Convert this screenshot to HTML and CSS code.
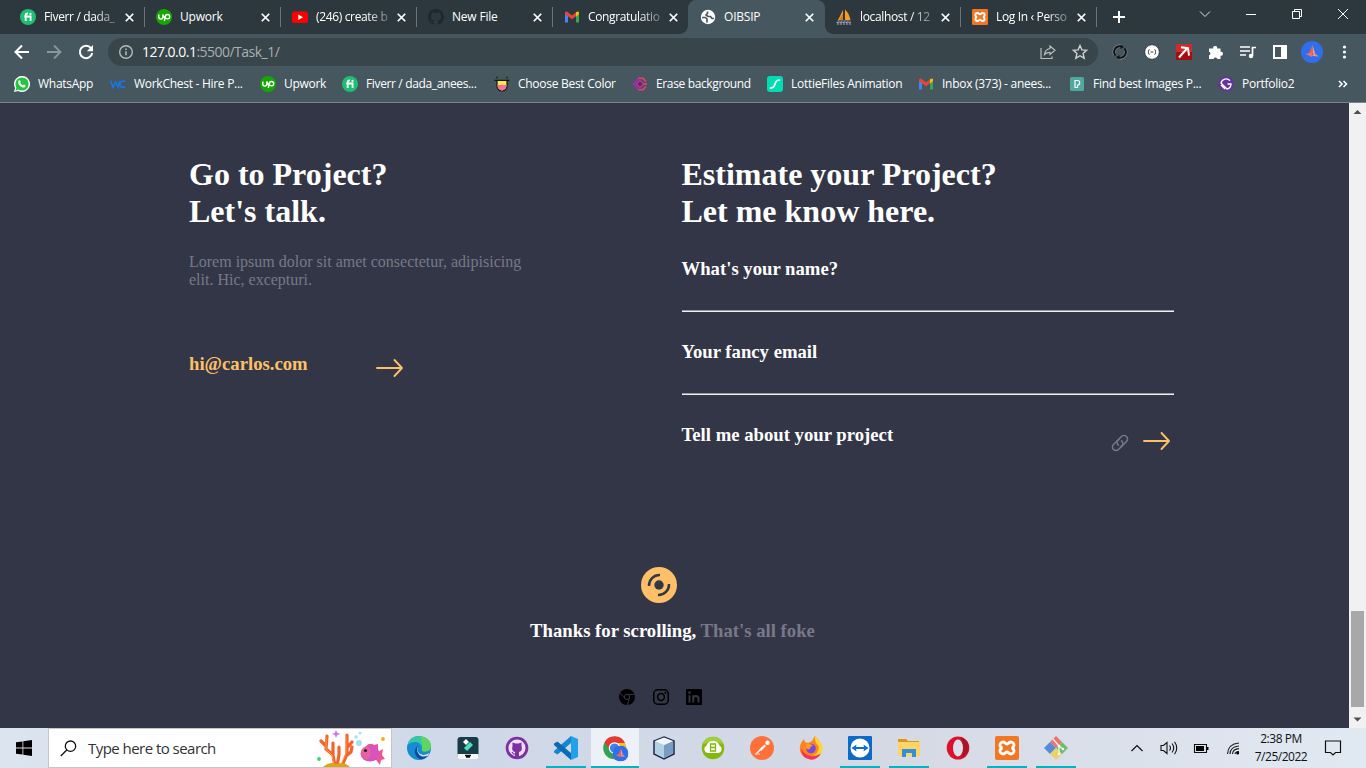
FILE: index.html
```html
<!DOCTYPE html>
<html lang="en">
<head>
<meta charset="utf-8">
<title>OIBSIP</title>
<link rel="stylesheet" href="styles.css">
</head>
<body>
<svg width="0" height="0" class="defs">
  <symbol id="close" viewBox="0 0 16 16"><path d="M4 4l8 8M12 4l-8 8" stroke="#fff" stroke-width="1.800" fill="none"/></symbol>
  <symbol id="fiverr" viewBox="0 0 16 16"><circle cx="8" cy="8" r="8" fill="#1dbf73"/><path d="M5.700 12V6.200Q5.700 4.300 8 4.500M4.300 7.500h6.300V12" stroke="#fff" stroke-width="1.800" fill="none"/><circle cx="10.500" cy="4.900" r="1.100" fill="#fff"/></symbol>
  <symbol id="upwork" viewBox="0 0 16 16"><circle cx="8" cy="8" r="8" fill="#14a800"/><path d="M2.800 5.500v2.600a2 2 0 0 0 4 0V5.500Q7.500 8 9 9.600M8.300 12l1-4.300a2.200 2.200 0 1 1 2.300 2.200Q9.800 9.800 8.500 8" stroke="#fff" stroke-width="1.400" fill="none"/></symbol>
  <symbol id="gmail" viewBox="0 0 16 16"><path d="M1 4v9.500h3V7z" fill="#4285f4"/><path d="M15 4v9.500h-3V7z" fill="#34a853"/><path d="M1 4Q1 2 3 2.600L8 6.400l5-3.800V6.500L8 10.300 1 5z" fill="#ea4335"/><path d="M12 3.300Q15 1.500 15 4v1.300l-3 2.300z" fill="#fbbc04"/></symbol>
  <symbol id="xampp" viewBox="0 0 24 24"><rect width="24" height="24" rx="2" fill="#f37623"/><path d="M7.500 12a3 3 0 1 1 2.700-5Q12 9 13.800 7a3 3 0 1 1 2.700 5 3 3 0 1 1-2.700 5Q12 15 10.200 17a3 3 0 1 1-2.700-5z" fill="none" stroke="#fff" stroke-width="2.900"/></symbol>
  <symbol id="github" viewBox="0 0 16 16"><path fill="currentColor" d="M8 0C3.580 0 0 3.580 0 8c0 3.540 2.290 6.530 5.470 7.590.4.070.550-.170.550-.380 0-.190-.010-.820-.010-1.490-2.010.370-2.530-.490-2.690-.940-.090-.230-.480-.940-.820-1.130-.280-.150-.680-.520-.010-.530.630-.010 1.080.580 1.230.820.720 1.210 1.870.870 2.330.660.070-.520.280-.870.510-1.070-1.780-.200-3.640-.890-3.640-3.950 0-.870.310-1.590.820-2.150-.080-.200-.360-1.020.080-2.120 0 0 .670-.210 2.200.820.640-.180 1.320-.270 2-.270s1.360.090 2 .270c1.530-1.040 2.200-.820 2.200-.820.440 1.100.160 1.920.080 2.120.510.560.820 1.270.820 2.150 0 3.070-1.870 3.750-3.650 3.950.290.250.540.730.540 1.480 0 1.070-.010 1.930-.010 2.200 0 .210.150.460.550.380A8.010 8.010 0 0 0 16 8c0-4.420-3.580-8-8-8z"/></symbol>
  <symbol id="bird" viewBox="0 0 22 22"><circle cx="11" cy="11" r="11" fill="#2f6fed"/><path d="M11.500 4l2.500 8-2.500 1z" fill="#ff9a83"/><path d="M11.500 4L8 12l3.500 1z" fill="#e9604f"/><path d="M4.500 13l6.500-1.500V16z" fill="#f56f60"/><path d="M17.500 15.500L13 11.500 11 15z" fill="#fb8c76"/></symbol>
  <symbol id="arrow" viewBox="0 0 28 20"><path d="M1 10h25M18.500 2l7.500 8-7.500 8" fill="none" stroke="#fdc068" stroke-width="1.900" stroke-linecap="round" stroke-linejoin="round"/></symbol>
</svg>

<header class="browser">
  <div class="tabstrip">
    <div class="tab sep"><svg><use href="#fiverr"/></svg><span class="fade">Fiverr / dada_</span><svg class="x"><use href="#close"/></svg></div>
    <div class="tab sep"><svg><use href="#upwork"/></svg><span>Upwork</span><svg class="x"><use href="#close"/></svg></div>
    <div class="tab sep"><svg viewBox="0 0 16 16"><rect y="2.500" width="16" height="11.500" rx="2.500" fill="#f00"/><path d="M6.300 5.500l4.700 2.700-4.700 2.700z" fill="#fff"/></svg><span class="fade">(246) create b</span><svg class="x"><use href="#close"/></svg></div>
    <div class="tab sep"><svg class="gh"><use href="#github"/></svg><span>New File</span><svg class="x"><use href="#close"/></svg></div>
    <div class="tab"><svg><use href="#gmail"/></svg><span class="fade">Congratulatio</span><svg class="x"><use href="#close"/></svg></div>
    <div class="tab active"><svg viewBox="0 0 16 16"><circle cx="8" cy="8" r="7.200" fill="#fff"/><path d="M2 8.500h3.500l1.500 1.500v3.500M7.500 2.500v2L6 6l2 1.500h2.500L12 9.500h2" fill="none" stroke="#46575f" stroke-width="1.700"/></svg><span>OIBSIP</span><svg class="x"><use href="#close"/></svg></div>
    <div class="tab sep"><svg viewBox="0 0 16 16"><path d="M7 1L2 11h5zM9 .5V11h5.500Q13 4 9 .5z" fill="#f89c1d"/><path d="M7 4L3.500 11H7z" fill="#e0760b"/><path d="M1.500 12h13M.5 13.500h15M1 15h14" stroke="#a8a9c9" stroke-width="1" stroke-dasharray="2.200 .8"/></svg><span class="fade">localhost / 12</span><svg class="x"><use href="#close"/></svg></div>
    <div class="tab sep"><svg><use href="#xampp"/></svg><span class="fade">Log In ‹ Perso</span><svg class="x"><use href="#close"/></svg></div>
    <svg class="plus" viewBox="0 0 16 16"><path d="M8 2v12M2 8h12" stroke="#fff" stroke-width="2"/></svg>
    <div class="winctl">
      <svg viewBox="0 0 12 12"><path d="M1 3.500l5 5 5-5" fill="none" stroke="#ddd"/></svg>
      <svg viewBox="0 0 12 12"><path d="M1 6.500h10" stroke="#fff"/></svg>
      <svg viewBox="0 0 12 12"><path d="M1.500 3.500h7v7h-7zM3.500 3.500v-2h7v7h-2" fill="none" stroke="#fff"/></svg>
      <svg viewBox="0 0 12 12"><path d="M1 1l10 10M11 1L1 11" stroke="#fff"/></svg>
    </div>
  </div>

  <div class="toolbar">
    <div class="nav">
      <svg viewBox="0 0 16 16"><path d="M15 8H2M8 1.500L1.500 8 8 14.500" fill="none" stroke="#fff" stroke-width="2"/></svg>
      <svg viewBox="0 0 16 16"><path d="M1 8h13M8 1.500L14.500 8 8 14.500" fill="none" stroke="#8c979c" stroke-width="1.800"/></svg>
      <svg viewBox="0 0 16 16"><path d="M13 4.200A6.200 6.200 0 1 0 14.200 9" fill="none" stroke="#fff" stroke-width="2"/><path d="M15 1v6.200H8.800z" fill="#fff"/></svg>
    </div>
    <div class="omnibox">
      <svg viewBox="0 0 16 16"><circle cx="8" cy="8" r="6.300" fill="none" stroke="#b5bdc0" stroke-width="1.400"/><path d="M8 7.200v4M8 4.400v1.500" stroke="#b5bdc0" stroke-width="1.500"/></svg>
      <div class="url"><b>127.0.0.1</b>:5500/Task_1/</div>
      <svg viewBox="0 0 16 16"><path d="M1 4v10.500h11v-2" fill="none" stroke="#b5bdc0" stroke-width="1.200"/><path d="M10 2l5 4.300-5 4.200V8.300Q6.500 8.300 4.500 10.500q.5-5 5.500-6z" fill="none" stroke="#b5bdc0" stroke-width="1.200"/></svg>
      <svg viewBox="0 0 16 16"><path d="M8 1.500l1.900 4.400 4.800.4-3.600 3.200 1.100 4.700L8 11.700l-4.200 2.500 1.100-4.700L1.300 6.300l4.800-.4z" fill="none" stroke="#ccd1d3" stroke-width="1.400"/></svg>
    </div>
    <div class="ext">
      <svg viewBox="0 0 16 16"><g fill="none" stroke="#8d989d" stroke-width="3"><path d="M3 11a6 6 0 0 1 6-9M13 5a6 6 0 0 1-6 9"/></g><g fill="none" stroke="#111" stroke-width="2"><path d="M3.500 11.500A5.700 5.700 0 0 1 9 2.300M12.500 4.500A5.700 5.700 0 0 1 7 13.700"/></g><path d="M8.500.8L12 3 8.500 5zM7.500 11L4 13.200 7.500 15.200z" fill="#111"/></svg>
      <svg viewBox="0 0 16 16"><circle cx="8" cy="8" r="7.300" fill="#fff" stroke="#26313a" stroke-width=".8"/><path d="M5.500 5.500Q4.300 5.500 4.700 7.200L4 8l.7.800q-.4 1.700.8 1.700M10.500 5.500q1.200 0 .8 1.700l.7.800-.7.800q.4 1.700-.8 1.700M6.500 8h3" fill="none" stroke="#333" stroke-width=".9"/></svg>
      <svg viewBox="0 0 16 16"><rect width="16" height="16" fill="#cf2a2c"/><rect y="8" width="16" height="8" fill="#a50d12"/><path d="M3 13.500l8-9" stroke="#fff" stroke-width="2"/><path d="M5 3.200l7 1 1 7.500" fill="none" stroke="#fff" stroke-width="1.900"/></svg>
      <svg viewBox="0 0 16 16"><path d="M1 4.500h4.200a2 2 0 1 1 3.900 0H12.500v3.300a2 2 0 1 1 0 3.900V15H9.300a1.900 1.900 0 0 0-3.700 0H1v-3.800a1.800 1.800 0 0 0 0-3.500z" fill="#fff"/></svg>
      <svg viewBox="0 0 16 16"><path d="M0 3h10M0 7h10M0 11h6M12.500 12V3.500H16" fill="none" stroke="#fff" stroke-width="1.700"/><circle cx="11" cy="12" r="2.200" fill="#fff"/></svg>
      <svg viewBox="0 0 16 16"><path d="M2 2h12v12H2z" fill="none" stroke="#fff" stroke-width="2"/><path d="M9 2h5v12H9z" fill="#fff"/></svg>
      <svg class="avatar"><use href="#bird"/></svg>
      <svg viewBox="0 0 16 16"><g fill="#fff"><circle cx="8.500" cy="3" r="1.600"/><circle cx="8.500" cy="8" r="1.600"/><circle cx="8.500" cy="13" r="1.600"/></g></svg>
    </div>
  </div>

  <nav class="bookmarks">
    <a><svg viewBox="0 0 16 16"><path d="M0 16L1.100 12A8 8 0 1 1 4 14.900z" fill="#fff"/><circle cx="8" cy="8" r="6.600" fill="#25c33e"/><path d="M1.500 14.500l.8-3 2.200 2.200z" fill="#25c33e"/><path d="M5 4.300q1.300-.5 1.700 1.500l-.6.900q1 1.900 2.900 2.700l.9-.9q2 .8 1.700 1.500-.4 1.900-2.900 1.500Q4.700 10 4.200 6.200q0-1.500.8-1.900z" fill="#fff"/></svg><span>WhatsApp</span></a>
    <a><svg viewBox="0 0 16 16"><path d="M.5 4.500L3 11.500 5.500 6 8 11.500 9.500 5M15.300 5.500q-4.800-1.500-5.300 2.500t5.300 3" fill="none" stroke="#1677ea" stroke-width="1.500"/></svg><span>WorkChest - Hire P...</span></a>
    <a><svg><use href="#upwork"/></svg><span>Upwork</span></a>
    <a class="tight"><svg><use href="#fiverr"/></svg><span>Fiverr / dada_anees...</span></a>
    <a><svg viewBox="0 0 16 16"><path d="M3 4.500h10V10a5 5 0 0 1-10 0z" fill="#ffe94a" stroke="#151515" stroke-width="1.200"/><path d="M3.600 9h8.800v1a4.400 4.400 0 0 1-8.800 0z" fill="#f5739b"/><path d="M.5 4.300h15M3 .8v1.400M13 .8v1.400" stroke="#151515" stroke-width="1.300"/></svg><span>Choose Best Color</span></a>
    <a class="tight"><svg viewBox="0 0 16 16"><path d="M7 2L1.500 8 7 14" fill="none" stroke="#b322bd" stroke-width="1.600"/><path d="M8 4.500L4.500 8 8 11.500 11.500 8z" fill="#652077" stroke="#d02c98" stroke-width="1.200"/><path d="M6.500 2.200H11L14 5.500M15 8h-4M14 10.500l-3 3.300H6.500" fill="none" stroke="#f43b70" stroke-width="1.600"/></svg><span>Erase background</span></a>
    <a><svg viewBox="0 0 16 16"><rect width="16" height="16" rx="3" fill="#00ddb3"/><path d="M3.500 12Q7 12 8 8t4.500-4" fill="none" stroke="#fff" stroke-width="1.700" stroke-linecap="round"/></svg><span>LottieFiles Animation</span></a>
    <a><svg><use href="#gmail"/></svg><span>Inbox (373) - anees...</span></a>
    <a><svg viewBox="0 0 16 16"><rect x="1" y="1" width="14" height="14" rx="1.500" fill="#4eaa9b"/><path d="M6 11.500v-7h2.500q2.200 0 2.200 2.200T8.500 9v2.500z" fill="none" stroke="#fff" stroke-width="1.200"/></svg><span>Find best Images P...</span></a>
    <a><svg viewBox="0 0 16 16"><circle cx="8" cy="8" r="7.800" fill="#639"/><path d="M12 4.600A5.200 5.200 0 0 0 3 7l6 6a5.200 5.200 0 0 0 4-5h-3.500M3 9l4 4" fill="none" stroke="#fff" stroke-width="1.300"/></svg><span>Portfolio2</span></a>
    <svg class="more" viewBox="0 0 10 10"><path d="M1 2l3 3-3 3M5.500 2l3 3-3 3" fill="none" stroke="#fff" stroke-width="1.600"/></svg>
  </nav>
</header>

<div class="viewport">
  <main>
    <div class="contact">
      <section class="talk">
        <h2>Go to Project?<br>Let's talk.</h2>
        <p>Lorem ipsum dolor sit amet consectetur, adipisicing<br>elit. Hic, excepturi.</p>
        <div class="mail"><span>hi@carlos.com</span><svg class="arrow"><use href="#arrow"/></svg></div>
      </section>
      <section class="estimate">
        <h2>Estimate your Project?<br>Let me know here.</h2>
        <div class="field">What's your name?</div>
        <div class="field">Your fancy email</div>
        <div class="last"><span>Tell me about your project</span>
          <svg class="link" viewBox="0 0 18 18"><g fill="none" stroke="#777989" stroke-width="1.500" stroke-linecap="round"><path d="M8 5.600L6.700 6.300 2.500 10.500a3.500 3.500 0 0 0 5 5L11 12a3.500 3.500 0 0 0-.5-5.200"/><path d="M10 12.400l1.300-.7 4.200-4.200a3.500 3.500 0 0 0-5-5L7 6a3.500 3.500 0 0 0 .5 5.200"/></g></svg>
          <svg class="arrow"><use href="#arrow"/></svg></div>
      </section>
    </div>
    <footer>
      <svg class="disc" viewBox="0 0 36 36"><circle cx="18" cy="18" r="18" fill="#fdc068"/><circle cx="18" cy="18" r="4.700" fill="#333646"/><path d="M8 19a10.500 10.500 0 0 1 11-11M28 17A10.500 10.500 0 0 1 17 28" fill="none" stroke="#333646" stroke-width="2.500"/></svg>
      <div class="thanks">Thanks for scrolling, <span>That's all foke</span></div>
      <div class="social">
        <svg viewBox="0 0 16 16"><circle cx="8" cy="8" r="8"/><g fill="none" stroke="#333646" stroke-width="1"><circle cx="8" cy="8" r="2.600"/><path d="M8 5.400h7.700M5.700 9.300L1 4M10.300 9.300L8.500 16"/></g></svg>
        <svg viewBox="0 0 16 16"><g fill="none" stroke="#000" stroke-width="1.500"><rect x=".75" y=".75" width="14.500" height="14.500" rx="4"/><circle cx="8" cy="8" r="3.400"/></g><circle cx="12.300" cy="3.700" r="1"/></svg>
        <svg viewBox="0 0 16 16"><rect width="16" height="16" rx="1"/><path d="M3.500 6.200v7.400M7.300 13.600V6.200M7.300 9.300q0-2.200 2.600-2.200t2.600 2.600v3.900" fill="none" stroke="#333646" stroke-width="2"/><circle cx="3.500" cy="3.600" r="1.300" fill="#333646"/></svg>
      </div>
    </footer>
  </main>
  <div class="scrollbar"><svg viewBox="0 0 17 17"><path d="M4.500 11h8l-4-4z" fill="#505050"/></svg><i></i><svg viewBox="0 0 17 17"><path d="M4.500 6.500h8l-4 4z" fill="#505050"/></svg></div>
</div>

<div class="taskbar">
  <div class="start"><svg viewBox="0 0 16 16"><path d="M0 2.300L6.500 1.400V7.500H0zM7.300 1.300L16 0v7.500H7.300zM0 8.400h6.500v6.200L0 13.700zM7.300 8.400H16V16l-8.700-1.300z"/></svg></div>
  <div class="search">
    <svg viewBox="0 0 17 17"><circle cx="10.500" cy="6.200" r="5.200" fill="none" stroke="#111" stroke-width="1.300"/><path d="M6.700 10L.8 16" stroke="#111" stroke-width="1.300"/></svg>
    <span>Type here to search</span>
    <svg class="reef" viewBox="0 0 72 38"><g fill="none" stroke="#f6622b" stroke-width="3.200" stroke-linecap="round" stroke-linejoin="round"><path d="M18 37L16 26 9 20 10 7M9 17L4 12M16 26V14M25 37l5-12V6M30 19l5-6M29 27l5-4 1-5M20 37l2-11v-8"/></g><g stroke="#ff9a45" stroke-width="1" fill="none" stroke-linecap="round"><path d="M17 36L15 26 9 20V8M24 36l5-12V7"/></g><path d="M6 38q7-6 13-3 8-3 14 3z" fill="#e3a214"/><path d="M19 1l1.300 2.700L23.500 5l-3.200 1L19 9l-1.200-3L15 5l2.800-1.300z" fill="#c77bf2"/><circle cx="2" cy="30" r="1.900" fill="#43cf78"/><circle cx="66" cy="10" r="1.900" fill="#f8ac10"/><g fill="#a7dff6"><circle cx="39" cy="8" r="1.800"/><circle cx="43" cy="4" r="1.500"/><circle cx="42" cy="14" r="3"/></g><path d="M59 24l7-4-1 6 3 4-4 1-1 5-6-8z" fill="#f0538d"/><path d="M49 17q4-4 8-1l4-1v6l-8 2z" fill="#f0538d"/><ellipse cx="53" cy="24.500" rx="9.500" ry="8" fill="#d754c0"/><path d="M45.500 20q-2 4 0 8.500 4 4 7 0 3-7-2-11-3 0-5 2.500z" fill="#e763a0"/><circle cx="48.500" cy="21.500" r="1.600" fill="#222"/></svg>
  </div>
  <div class="apps">
    <div><svg viewBox="0 0 24 24"><circle cx="12" cy="12" r="12" fill="#168bd2"/><path d="M.5 9Q3-1 14 .2 24 2 24 11q-1 5-7 4.500-3-.5-2-3Q15 7 9 6 3 6 .5 9z" fill="#38c7a4"/><path d="M13 .2Q24 2 24 11q-1 5-7 4.500-3-.5-2-3 1-7-2-12z" fill="#5fd65c"/><path d="M11 9q-6 6-1 12 5 5 11-1-3 1-7-1-6-4-3-10z" fill="#0c4999"/><path d="M11 10q-2 8 5 9 4 0 6-2 0 4-7 3.500Q8 17 11 10z" fill="#d6e2f0"/></svg></div>
    <div><svg viewBox="0 0 24 24"><rect x="1.500" y="1" width="21" height="21" rx="3" fill="#173c48"/><path d="M1.500 18h21v2a3 3 0 0 1-3 3h-15a3 3 0 0 1-3-3z" fill="#f7f7f7"/><path d="M10 3l3 3-3 3-3-3z" fill="#fff"/><path d="M14 6l3 3-6 6-3-3z" fill="#4bdfc0"/><path d="M9 19.500h6M10 21h4" stroke="#111" fill="none" stroke-width="1.500"/></svg></div>
    <div><svg viewBox="0 0 24 24"><circle cx="12" cy="12" r="11.300" fill="#7c31a2"/><circle cx="12" cy="12" r="8.500" fill="#efdcf6"/><path d="M7.500 6.500l3 1h3l3-1v3.500q1.500 5-2.500 6v5h-4v-5q-4-1-2.500-6z" fill="#7c31a2"/><path d="M10.500 18H8.500L7 16" stroke="#7c31a2" stroke-width="1.200" fill="none"/></svg></div>
    <div class="run"><svg viewBox="0 0 24 24"><path d="M17 0l7 3v18l-7 3z" fill="#23a0ea"/><path d="M17 0v7L3.500 18.500 0 16.500V15z" fill="#1686cf"/><path d="M17 24v-7L3.500 5.500 0 7.500V9z" fill="#0b6cb6"/></svg></div>
    <div class="run on"><svg viewBox="0 0 24 24"><circle cx="11.500" cy="12" r="11.300" fill="#34a350"/><path d="M1.500 6.500A11.300 11.300 0 0 1 22 7H11.500l-5.300 6z" fill="#e33b2e"/><path d="M22 7a11.300 11.300 0 0 1-10.500 16.300L16.500 14l-5-7z" fill="#fbc116"/><circle cx="11.500" cy="12" r="5.800" fill="#fff"/><circle cx="11.500" cy="12" r="4.600" fill="#4082ed"/><svg x="9.500" y="9.500" width="16" height="16"><use href="#bird" width="16" height="16"/></svg></svg></div>
    <div><svg viewBox="0 0 24 24"><path d="M12 1l10 4v13l-10 5L2 18V5z" fill="#c3d9ec" stroke="#1d2b4c" stroke-width="1.500"/><path d="M12 9l9-4v12.500L12 22z" fill="#7b9cc2"/><path d="M3 5l9 4v13l-9-4.500z" fill="#b2d2e2"/><path d="M3 5l9-3.500L21 5l-9 4z" fill="#f0f5fa"/></svg></div>
    <div><svg viewBox="0 0 24 24"><circle cx="12" cy="12" r="11.200" fill="#83b80c"/><path d="M2 8Q5 1 12 1q8 0 10 7-10-4-20 0z" fill="#a3cf3e"/><path d="M6.500 17a4 4 0 0 1-1-7.500Q7 5 12 5t6.500 4.500a4 4 0 0 1-1 7.500z" fill="#fff"/><path d="M9.500 8h5v7h-5zM9.500 11.500h5" fill="none" stroke="#83b80c" stroke-width="1.300"/></svg></div>
    <div><svg viewBox="0 0 24 24"><circle cx="12" cy="12" r="12" fill="#ff7139"/><path d="M5.500 18.500L13 11" stroke="#fff" stroke-width="1.300"/><path d="M9.500 13.500l5-5 1.500 1.500-5 5z" fill="#fff"/><circle cx="17.500" cy="6.800" r="2.200" fill="#fff"/><path d="M6 18h4" stroke="#ffd0b9"/></svg></div>
    <div><svg viewBox="0 0 24 24"><path d="M5 3l1 3 3 1 4-2 3-5 4 5q5 6 2 12-4 7-11 6-8-1-10-8Q0 8 5 3z" fill="#ff841c"/><path d="M16 0q-1 6 4 11-1 7-6 8 6 3 9-3 2-7-3-11z" fill="#ffd632"/><path d="M2 12q0 10 9 11.500 7 1 11-6-7 4-12 2-5-1-8-7.500z" fill="#f9325d"/><circle cx="12" cy="12.500" r="4.800" fill="#7649df"/><path d="M7 8q5-1 7 2-3 0-3 3-3 1-4-1z" fill="#fa9c26"/></svg></div>
    <div class="run"><svg viewBox="0 0 24 24"><rect width="24" height="24" rx="1" fill="#0c6bc7"/><circle cx="12" cy="12" r="9.500" fill="#fff"/><path d="M3.500 12L8.500 8.500l-.5 2.500h8l-.5-2.500L20.500 12l-5 3.500.5-2.500H8l.5 2.500z" fill="#126dc5"/></svg></div>
    <div class="run"><svg viewBox="0 0 24 24"><path d="M1 3h8l2 2h11v5H1z" fill="#d99a13"/><path d="M1 6h22v14H1z" fill="#ffd467"/><path d="M5 21v-8h14v8h-4v-4H9v4z" fill="#3290d8"/></svg></div>
    <div><svg viewBox="0 0 24 24"><ellipse cx="12" cy="12" rx="11.300" ry="11.500" fill="#d9132b"/><path d="M15 1q9 4 7.500 12-1 6-7.500 9 4-10 0-21z" fill="#aa1426"/><ellipse cx="12" cy="12" rx="5" ry="8.500" fill="#dbdfea"/></svg></div>
    <div class="run"><svg><use href="#xampp"/></svg></div>
    <div class="run"><svg viewBox="0 0 24 24"><path d="M12 0l6 6-6 6-6-6z" fill="#ee7370"/><path d="M6 6l6 6-6 6-6-6z" fill="#548dd5"/><path d="M18 6l6 6-6 6-6-6z" fill="#6bbd66"/><path d="M12 12l6 6-6 6-6-6z" fill="#ead16c"/><path d="M9 3l6 7v9M15 10l4 3" fill="none" stroke="#f4f4f4" stroke-width="1.300"/><g fill="#f4f4f4"><circle cx="15" cy="10" r="1.300"/><circle cx="15" cy="18" r="1.300"/><circle cx="19" cy="13" r="1.300"/></g></svg></div>
  </div>
  <div class="tray">
    <svg viewBox="0 0 18 18"><path d="M3.500 12L9 6.500l5.500 5.500" fill="none" stroke="#111" stroke-width="1.200"/></svg>
    <svg viewBox="0 0 18 18"><path d="M1 6.500h2.500L7 3.500v11L3.500 11.500H1zM9.500 6.500q2 2.500 0 5M12 4.500q3.500 4.500 0 9M14.500 2.800q4.500 6.200 0 12.400" fill="none" stroke="#111" stroke-width="1.100"/></svg>
    <svg viewBox="0 0 18 18"><path d="M2.500 5.500h12v8h-12z" fill="none" stroke="#111" stroke-width="1.100"/><path d="M4 7h8v5H4zM14.500 8h2v3h-2z"/></svg>
    <svg viewBox="0 0 18 18"><g fill="none" stroke="#222" stroke-width="1.200"><path d="M3.500 15Q4 5 15 4M6 15Q6.500 7.500 15 7M8.500 15Q9 10 15 9.700M11 15q.5-2.500 4-2.500"/></g><circle cx="13.700" cy="14" r="1.500"/></svg>
    <div class="clock"><span>2:38 PM</span><span>7/25/2022</span></div>
    <svg class="note" viewBox="0 0 18 18"><path d="M1.500 2h15v11.500h-5L9 16l-2.500-2.500h-5z" fill="none" stroke="#111" stroke-width="1.200"/></svg>
  </div>
</div>
</body>
</html>
```
FILE: styles.css
```css
* { box-sizing: border-box; }
body {
  margin: 0;
  width: 1366px;
  height: 768px;
  overflow: hidden;
  display: flex;
  flex-direction: column;
  font: 12px/16px "Open Sans", "Noto Sans", sans-serif;
  color: #fff;
}
svg { display: block; width: 16px; height: 16px; flex: none; }
.defs { position: absolute; width: 0; height: 0; }

.browser { height: 103px; background: #46575f; border-bottom: 1px solid #77848a; flex: none; }
.tabstrip { height: 34px; background: #2d383e; display: flex; align-items: center; padding-left: 8px; }
.tab { width: 136px; height: 34px; display: flex; align-items: center; gap: 8px; padding: 0 7px 0 12px; position: relative; letter-spacing: -.2px; }
.tab span { flex: 1; min-width: 0; white-space: nowrap; }
.tab .fade { -webkit-mask-image: linear-gradient(to right, #000 68%, transparent 110%); mask-image: linear-gradient(to right, #000 68%, transparent 110%); letter-spacing: -.35px; }
.tab .x { width: 15px; height: 15px; margin-left: -4px; }
.sep::after { content: ""; position: absolute; right: -1px; top: 7px; width: 1px; height: 20px; background: #69757b; }
.gh { color: #1f2730; }
.active { background: #46575f; border-radius: 8px 8px 0 0; width: 137px; margin-right: -1px; padding-right: 8px; }
.active::before, .active::after { content: ""; position: absolute; bottom: 0; width: 8px; height: 8px; }
.active::before { left: -8px; background: radial-gradient(circle at 0 0, transparent 7.5px, #46575f 8px); }
.active::after { right: -8px; background: radial-gradient(circle at 100% 0, transparent 7.5px, #46575f 8px); }
.plus { margin-left: 15px; }
.winctl { margin-left: auto; display: flex; gap: 34px; padding-right: 17px; margin-top: -6px; }
.winctl svg { width: 12px; height: 12px; }

.toolbar { height: 36px; display: flex; align-items: center; }
.nav { width: 108px; display: flex; gap: 16px; padding-left: 14px; }
.omnibox { width: 990px; height: 28px; border-radius: 14px; background: #38454b; display: flex; align-items: center; gap: 16px; padding: 0 10px; }
.url { flex: 1; margin-left: -8px; font-size: 14px; letter-spacing: -.52px; color: #a8b0b4; }
.url b { font-weight: 400; color: #fff; }
.ext { display: flex; align-items: center; gap: 16px; padding-left: 14px; }
.ext .avatar { width: 22px; height: 22px; margin: 0 -3px; }

.bookmarks { height: 28px; display: grid; align-items: center; padding-left: 14px; grid-template-columns: 96px 150px 82px 152px 138px 135px 151px 151px 149px 120px 10px; }
.bookmarks a { display: flex; align-items: center; gap: 8px; white-space: nowrap; letter-spacing: -.28px; }
.bookmarks .tight { letter-spacing: -.36px; }
.more { width: 10px; height: 10px; }

.viewport { height: 625px; display: flex; flex: none; }
main { width: 1349px; background: #333646; padding: 53px 0 0 189px; font-family: "Liberation Serif", serif; }
.contact { display: grid; grid-template-columns: 492.5px 492.5px; height: 411px; }
h2 { margin: 0; font-size: 32px; line-height: 37px; }
.talk p { margin: 23px 0 0; font-size: 16px; line-height: 18px; color: #777989; }
.mail { display: flex; margin-top: 64px; color: #fdc068; font-size: 18.72px; line-height: 21px; font-weight: 700; }
.arrow { width: 28px; height: 20px; }
.mail .arrow { margin: 5px 0 0 68px; }
.estimate { font-size: 18.72px; line-height: 21px; font-weight: 700; }
.field { height: 54px; border-bottom: 1px solid #eee; box-shadow: inset 0 -1px #9a9a9a; margin-bottom: 29px; }
.estimate h2 + .field { margin-top: 28px; }
.last { display: flex; }
.last .link { width: 18px; height: 18px; margin: 10px 14px 0 auto; }
.last .arrow { margin: 7px 3px 0 0; }
footer { width: 940px; display: flex; flex-direction: column; align-items: center; }
.disc { width: 36px; height: 36px; }
.thanks { font-size: 18.72px; line-height: 21px; font-weight: 700; margin-top: 17px; white-space: nowrap; padding-left: 27px; }
.thanks span { color: #777989; }
.social { display: flex; gap: 18px; margin-top: 48px; padding-left: 2px; }
.social svg:last-child { margin-left: -1px; }

.scrollbar { width: 17px; background: #f1f1f1; display: flex; flex-direction: column; align-items: center; }
.scrollbar svg { width: 17px; height: 17px; }
.scrollbar i { width: 13px; height: 96px; background: #a8a8a8; margin-top: auto; margin-bottom: 4px; }

.taskbar { height: 40px; display: flex; flex: none; color: #111; background: linear-gradient(to right, #dce4ef, #cfd8e8 35%, #d5d9e4 65%, #e1e9f2); }
.start { width: 48px; display: grid; place-items: center; }
.search { width: 344px; background: #fff; border: 1px solid #c5c5c8; display: flex; align-items: center; padding: 0 2px 0 11px; font-size: 15px; letter-spacing: -.54px; color: #333; }
.search > svg { width: 17px; height: 17px; }
.search > span { margin-left: 11px; }
.search .reef { width: 72px; height: 38px; margin-left: auto; }
.apps { display: flex; gap: 1px; margin-left: 3px; }
.apps div { width: 48px; height: 40px; display: grid; place-items: center; position: relative; }
.apps > div > svg { width: 24px; height: 24px; overflow: visible; }
.apps .on { background: #edf0f7; }
.apps .on svg svg { width: 16px; height: 16px; }
.run::after { content: ""; position: absolute; left: 4px; right: 4px; bottom: 0; height: 2px; background: #00b4c4; }
.on.run::after { left: 0; right: 0; }
.tray { margin-left: auto; display: flex; align-items: center; padding-right: 24px; gap: 14px; }
.tray > svg { width: 18px; height: 18px; }
.clock { display: flex; flex-direction: column; align-items: center; line-height: 18px; letter-spacing: -.48px; width: 54px; margin: 0 2px 0 -2px; }
```
